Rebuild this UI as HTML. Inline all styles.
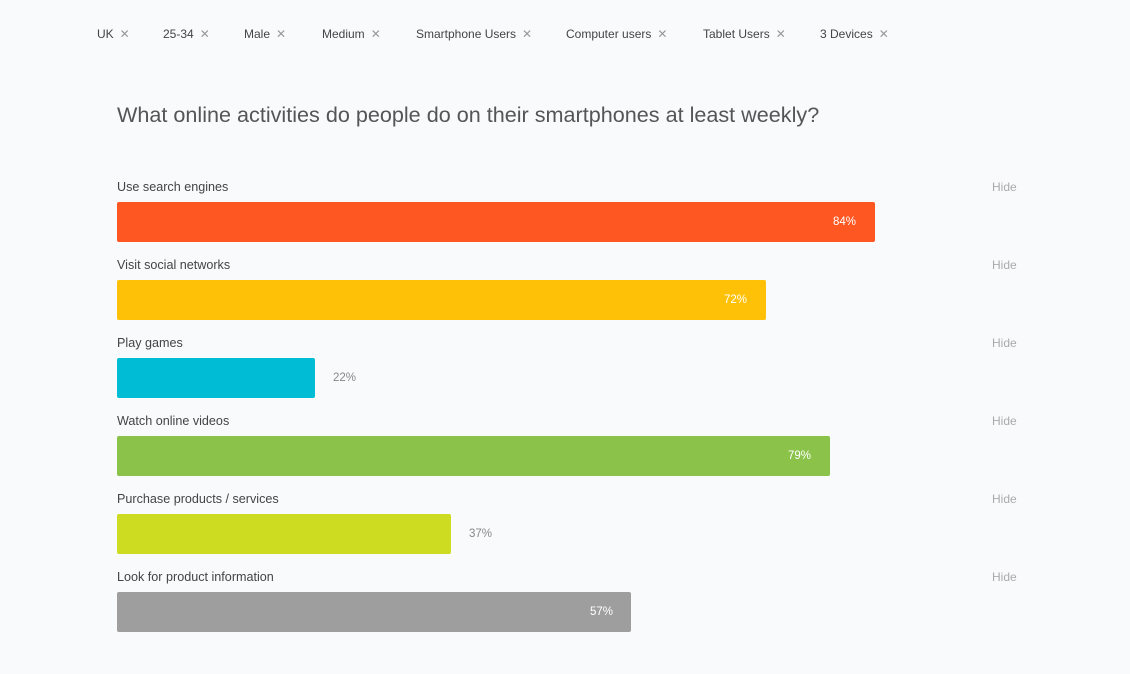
<!DOCTYPE html>
<html><head><style>
body{margin:0;width:1130px;height:674px;background:#f9fafc;font-family:"Liberation Sans",sans-serif;position:relative;overflow:hidden;color:#444}
.f{position:absolute;top:27px;font-size:12px;color:#444;white-space:nowrap}
.f span{color:#999;margin-left:6px;font-size:12px}
h1{position:absolute;left:117px;top:102px;margin:0;font-size:21.6px;font-weight:normal;color:#555}
.l{position:absolute;left:117px;font-size:12.6px;color:#444}
.h{position:absolute;left:992px;font-size:12px;color:#aaa}
.b{position:absolute;left:117px;height:40px;border-radius:2px}
.p{position:absolute;font-size:11.5px;height:40px;line-height:40px}
</style></head><body>
<div class="f" style="left:97px">UK<span>✕</span></div>
<div class="f" style="left:163px">25-34<span>✕</span></div>
<div class="f" style="left:244px">Male<span>✕</span></div>
<div class="f" style="left:322px">Medium<span>✕</span></div>
<div class="f" style="left:416px">Smartphone Users<span>✕</span></div>
<div class="f" style="left:566px">Computer users<span>✕</span></div>
<div class="f" style="left:703px">Tablet Users<span>✕</span></div>
<div class="f" style="left:820px">3 Devices<span>✕</span></div>
<h1>What online activities do people do on their smartphones at least weekly?</h1>

<div class="l" style="top:180px">Use search engines</div><div class="h" style="top:180px">Hide</div>
<div class="b" style="top:202px;width:758px;background:#ff5722"></div><div class="p" style="top:202px;left:833px;color:#fff">84%</div>

<div class="l" style="top:258px">Visit social networks</div><div class="h" style="top:258px">Hide</div>
<div class="b" style="top:280px;width:649px;background:#ffc107"></div><div class="p" style="top:280px;left:724px;color:#fff">72%</div>

<div class="l" style="top:336px">Play games</div><div class="h" style="top:336px">Hide</div>
<div class="b" style="top:358px;width:198px;background:#00bcd4"></div><div class="p" style="top:358px;left:333px;color:#888">22%</div>

<div class="l" style="top:414px">Watch online videos</div><div class="h" style="top:414px">Hide</div>
<div class="b" style="top:436px;width:713px;background:#8bc34a"></div><div class="p" style="top:436px;left:788px;color:#fff">79%</div>

<div class="l" style="top:492px">Purchase products / services</div><div class="h" style="top:492px">Hide</div>
<div class="b" style="top:514px;width:334px;background:#cddc20"></div><div class="p" style="top:514px;left:469px;color:#888">37%</div>

<div class="l" style="top:570px">Look for product information</div><div class="h" style="top:570px">Hide</div>
<div class="b" style="top:592px;width:514px;background:#9e9e9e"></div><div class="p" style="top:592px;left:590px;color:#fff">57%</div>
</body></html>
